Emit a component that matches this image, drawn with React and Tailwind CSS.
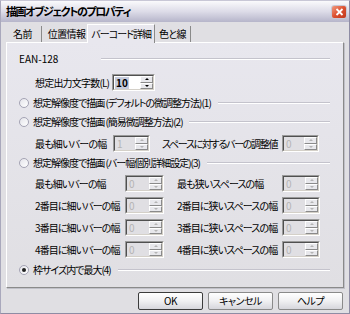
import React from "react";

const F = { fontFamily: '"Noto Sans CJK JP", "Noto Sans", sans-serif', fontFeatureSettings: '"palt"' };

function Spin({ value, disabled, w = "w-[42px]" }) {
  return (
    <div
      className={`flex h-[17px] ${w} shrink-0 items-stretch border border-t-[#9a9a9a] border-l-[#9a9a9a] border-r-[#ffffff] border-b-[#ffffff] ${
        disabled ? "bg-[#e0dfe3]" : "bg-white"
      }`}
    >
      <div className="flex flex-1 items-center border border-t-[#505050] border-l-[#505050] border-r-[#d4d0c8] border-b-[#d4d0c8] pl-[1px]">
        <span
          className={`px-[1px] text-[10px] leading-[12px] ${disabled ? "text-[#b4b4b4]" : "bg-[#c6cbdc] font-bold text-black"}`}
        >
          {value}
        </span>
        <div className="ml-auto flex h-full w-[13px] flex-col">
          <div className="flex flex-1 items-center justify-center border border-t-white border-l-white border-r-[#8a8a8a] border-b-[#8a8a8a] bg-[#e8e8ec]">
            <div className={`h-0 w-0 border-x-[2px] border-b-[2px] border-x-transparent ${disabled ? "border-b-[#b4b4b4]" : "border-b-black"}`} />
          </div>
          <div className="flex flex-1 items-center justify-center border border-t-white border-l-white border-r-[#8a8a8a] border-b-[#8a8a8a] bg-[#e8e8ec]">
            <div className={`h-0 w-0 border-x-[2px] border-t-[2px] border-x-transparent ${disabled ? "border-t-[#b4b4b4]" : "border-t-black"}`} />
          </div>
        </div>
      </div>
    </div>
  );
}

function Radio({ checked }) {
  return (
    <div className="flex h-[10px] w-[10px] items-center justify-center rounded-full border border-[#a4a3b4] bg-gradient-to-br from-[#e4e4ea] to-white">
      {checked && <div className="h-[4px] w-[4px] rounded-full bg-[#202020]" />}
    </div>
  );
}

function Line() {
  return <div className="h-[2px] flex-1 border-t border-t-[#c4c3cc] border-b border-b-white" />;
}

function RadioRow({ label, checked, mt, gap = "ml-[7px]" }) {
  return (
    <div className={`flex h-[16px] items-center pr-[13px] ${mt}`}>
      <div className="ml-[12px] mr-[4px]">
        <Radio checked={checked} />
      </div>
      <span className="whitespace-nowrap text-[10px] leading-none tracking-[-1px]">{label}</span>
      <div className={`${gap} flex flex-1`}>
        <Line />
      </div>
    </div>
  );
}

function DetailRow({ l, r, mt }) {
  return (
    <div className={`flex h-[17px] items-center ${mt}`}>
      <span className="ml-[28px] w-[90px] shrink-0 whitespace-nowrap text-[10px] leading-none tracking-[-0.9px]">{l}</span>
      <Spin value="0" disabled w="w-[39px]" />
      <span className="ml-[13px] w-[105px] shrink-0 whitespace-nowrap text-[10px] leading-none tracking-[-0.9px]">{r}</span>
      <Spin value="0" disabled w="w-[38px]" />
    </div>
  );
}

function Btn({ children, def }) {
  return (
    <div
      className={`flex h-[18px] w-[65px] items-center justify-center rounded-[2px] border ${
        def ? "border-[#3c3c3c]" : "border-[#8a8a8a]"
      } bg-gradient-to-b from-[#ffffff] via-[#f0f0f2] to-[#d6d6dc] text-[10px] leading-none tracking-[-0.5px]`}
    >
      {children}
    </div>
  );
}

export default function App() {
  return (
    <div className="h-[314px] w-[350px] overflow-hidden bg-[#e0dfe3] text-black" style={F}>
      <div className="flex h-[314px] flex-col border border-[#8e8ca4] border-t-[#c8c7d6] border-l-[#a9a8bc]">
        {/* title bar */}
        <div className="flex h-[21px] items-center bg-gradient-to-b from-[#fafafc] via-[#dddce8] to-[#b6b5ca] pl-[5px] pr-[2px]">
          <span className="text-[11px] font-bold leading-none tracking-[-1.4px]">描画オブジェクトのプロパティ</span>
          <div className="ml-auto flex h-[14px] w-[16px] items-center justify-center rounded-[3px] border border-[#c8c8d4] bg-gradient-to-br from-[#f09a80] via-[#dc5030] to-[#c0381c]">
            <svg width="9" height="8" viewBox="0 0 9 8">
              <path d="M1.5 1 L7.5 7 M7.5 1 L1.5 7" stroke="white" strokeWidth="1.8" />
            </svg>
          </div>
        </div>
        {/* tabs */}
        <div className="mt-[2px] flex h-[18px] items-end pl-[5px] text-[10px] leading-none tracking-[-0.6px]">
          <div className="flex h-[16px] items-center border-r border-r-[#8a8a8a] pl-[7px] pr-[9px]">名前</div>
          <div className="flex h-[16px] items-center pl-[6px] pr-[2px]">位置情報</div>
          <div className="relative z-10 -mb-px flex h-[19px] items-center border-x border-t border-x-[#8a8a8a] border-t-white border-l-white bg-[#e8e7ee] px-[3px] tracking-[-1px]">バーコード詳細</div>
          <div className="flex h-[16px] items-center border-r border-r-[#8a8a8a] px-[4px]">色と線</div>
        </div>
        {/* panel */}
        <div className="mx-[5px] flex h-[246px] flex-col border border-l-white border-t-white border-r-[#8a8a8a] border-b-[#8a8a8a] bg-gradient-to-b from-[#e8e7ee] to-[#e0dfe3] shadow-[1px_1px_0_#c0c0c8]">
          <div className="mt-[8px] flex h-[16px] items-center pr-[13px]">
            <span className="ml-[12px] text-[10px] leading-none">EAN-128</span>
            <div className="ml-[43px] flex flex-1">
              <Line />
            </div>
          </div>
          <div className="mt-[7px] flex h-[17px] items-center">
            <span className="ml-[28px] w-[77px] shrink-0 whitespace-nowrap text-[10px] leading-none tracking-[-0.8px]">想定出力文字数(L)</span>
            <Spin value="10" w="w-[43px]" />
          </div>
          <RadioRow mt="mt-[4px]" label="想定解像度で描画 (デフォルトの微調整方法)(1)" />
          <RadioRow mt="mt-[3px]" label="想定解像度で描画 (簡易微調整方法)(2)" gap="ml-[6px]" />
          <div className="mt-[5px] flex h-[17px] items-center">
            <span className="ml-[28px] w-[78px] shrink-0 whitespace-nowrap text-[10px] leading-none tracking-[-0.8px]">最も細いバーの幅</span>
            <Spin value="1" disabled w="w-[37px]" />
            <span className="ml-[12px] w-[120px] shrink-0 whitespace-nowrap text-[10px] leading-none tracking-[-1.3px]">スペースに対するバーの調整値</span>
            <Spin value="0" disabled w="w-[37px]" />
          </div>
          <RadioRow mt="mt-[3px]" label="想定解像度で描画 (バー幅個別詳細設定)(3)" />
          <DetailRow mt="mt-[4px]" l="最も細いバーの幅" r="最も狭いスペースの幅" />
          <DetailRow mt="mt-[5px]" l="2番目に細いバーの幅" r="2番目に狭いスペースの幅" />
          <DetailRow mt="mt-[5px]" l="3番目に細いバーの幅" r="3番目に狭いスペースの幅" />
          <DetailRow mt="mt-[5px]" l="4番目に細いバーの幅" r="4番目に狭いスペースの幅" />
          <RadioRow mt="mt-[4px]" checked label="枠サイズ内で最大(4)" />
        </div>
        {/* buttons */}
        <div className="mt-[4px] flex justify-end gap-[5px] pr-[6px]">
          <Btn def>OK</Btn>
          <Btn>キャンセル</Btn>
          <Btn>ヘルプ</Btn>
        </div>
      </div>
    </div>
  );
}
